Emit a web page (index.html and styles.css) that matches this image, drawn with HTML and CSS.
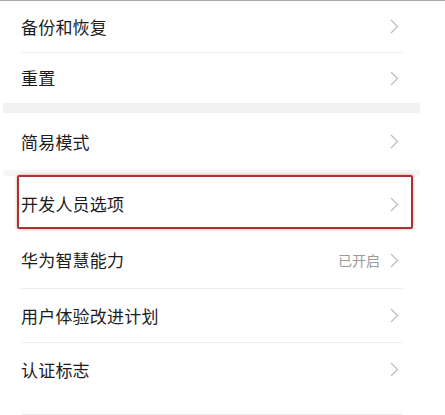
FILE: index.html
```html
<!DOCTYPE html>
<html lang="zh-CN">
<head>
<meta charset="utf-8">
<link rel="stylesheet" href="styles.css">
</head>
<body>
<div class="page">
  <div class="topline"></div>
  <div class="list">
    <div class="row h51"><span class="label">备份和恢复</span><span class="chev"><svg width="9" height="15" viewBox="0 0 9 15"><path d="M1 1 L7.5 7.5 L1 14" fill="none" stroke="#bcbcbc" stroke-width="1.2"/></svg></span></div>
    <div class="divider"></div>
    <div class="row h50"><span class="label">重置</span><span class="chev"><svg width="9" height="15" viewBox="0 0 9 15"><path d="M1 1 L7.5 7.5 L1 14" fill="none" stroke="#bcbcbc" stroke-width="1.2"/></svg></span></div>
    <div class="band"></div>
    <div class="row h57"><span class="label">简易模式</span><span class="chev"><svg width="9" height="15" viewBox="0 0 9 15"><path d="M1 1 L7.5 7.5 L1 14" fill="none" stroke="#bcbcbc" stroke-width="1.2"/></svg></span></div>
    <div class="band thin"></div>
    <div class="row h56 highlight"><span class="label">开发人员选项</span><span class="chev"><svg width="9" height="15" viewBox="0 0 9 15"><path d="M1 1 L7.5 7.5 L1 14" fill="none" stroke="#bcbcbc" stroke-width="1.2"/></svg></span></div>
    <div class="row h56"><span class="label">华为智慧能力</span><span class="value">已开启</span><span class="chev"><svg width="9" height="15" viewBox="0 0 9 15"><path d="M1 1 L7.5 7.5 L1 14" fill="none" stroke="#bcbcbc" stroke-width="1.2"/></svg></span></div>
    <div class="divider"></div>
    <div class="row h53"><span class="label">用户体验改进计划</span><span class="chev"><svg width="9" height="15" viewBox="0 0 9 15"><path d="M1 1 L7.5 7.5 L1 14" fill="none" stroke="#bcbcbc" stroke-width="1.2"/></svg></span></div>
    <div class="divider"></div>
    <div class="row h53"><span class="label">认证标志</span><span class="chev"><svg width="9" height="15" viewBox="0 0 9 15"><path d="M1 1 L7.5 7.5 L1 14" fill="none" stroke="#bcbcbc" stroke-width="1.2"/></svg></span></div>
    <div class="spacer"></div>
    <div class="divider"></div>
  </div>
</div>
</body>
</html>
```
FILE: styles.css
```css
html, body {
  margin: 0;
  padding: 0;
  background: #ffffff;
}
.page {
  width: 445px;
  height: 415px;
  overflow: hidden;
  font-family: "Noto Sans CJK SC", "Noto Sans", sans-serif;
  color: #1c1c1c;
}
.topline {
  height: 1px;
  background: #a8a8a8;
}
.list {
  width: 420px;
}
.row {
  display: flex;
  align-items: center;
  padding-left: 21px;
  padding-right: 21px;
  box-sizing: border-box;
}
.h50 { height: 50px; }
.h51 { height: 51px; }
.h53 { height: 53px; }
.h56 { height: 56px; }
.h57 { height: 57px; }
.label {
  flex: 1;
  font-size: 17px;
  line-height: 20px;
  letter-spacing: 0.2px;
}
.value {
  font-size: 14px;
  line-height: 18px;
  color: #9a9a9a;
  margin-right: 10px;
}
.chev {
  display: flex;
  align-items: center;
}
.chev svg { display: block; }
.divider {
  height: 1px;
  background: #ececec;
  margin-left: 21px;
  margin-right: 17px;
}
.band {
  height: 10px;
  background: #f2f2f2;
  margin-left: 3px;
}
.band.thin {
  height: 6px;
  background: #f6f6f6;
}
.spacer {
  height: 18px;
}
.highlight {
  position: relative;
}
.highlight::after {
  content: "";
  position: absolute;
  left: 17px;
  top: -1px;
  width: 396px;
  height: 54px;
  box-sizing: border-box;
  border: 2px solid #a8342f;
  border-radius: 2px;
  box-shadow: 0 0 3px rgba(210, 80, 70, 0.6);
}
```
